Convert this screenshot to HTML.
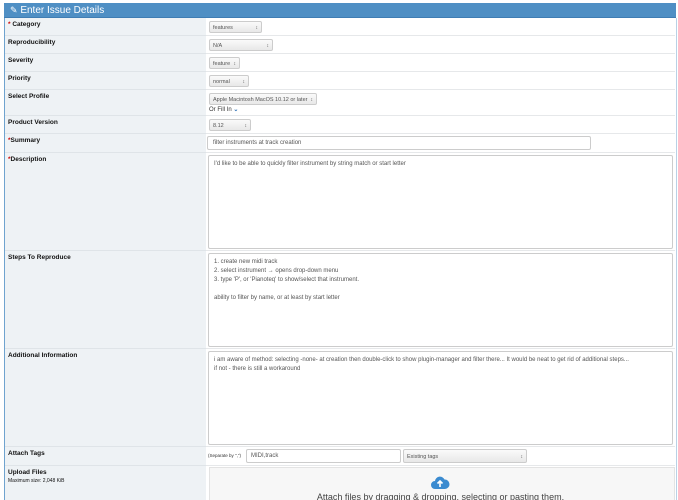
<!DOCTYPE html>
<html><head><meta charset="utf-8"><style>
body{margin:0;width:678px;height:500px;overflow:hidden;background:#fff;font-family:"Liberation Sans",sans-serif;position:relative}
.a{position:absolute}
.hdr{left:4px;top:3px;width:672px;height:14px;background:#4f8fc4;border-bottom:1px solid #3f7db3;color:#fff;font-size:10px;line-height:14px}
.frame{left:4px;top:18px;width:671px;height:482px;border-left:1px solid #6fa3cf;border-right:1px solid #b9d1e6}
.lab{left:5px;width:201px;background:#eef2f5;font-size:6.5px;font-weight:bold;color:#111;padding:3px 0 0 3px;box-sizing:border-box;border-bottom:1px solid #dfe4e8}
.val{left:206px;width:469px;background:#fff;border-bottom:1px solid #e6e8ea;box-sizing:border-box;overflow:hidden}
.sel{position:absolute;height:12px;border:1px solid #ccc;border-radius:2px;background:linear-gradient(#fafafa,#e8e8e8);font-size:5.5px;color:#555;line-height:12px;padding-left:3px;box-sizing:border-box}
.sel:after{content:"\2195";position:absolute;right:3px;top:0;font-size:5px}
.ta{position:absolute;border:1px solid #ccc;background:#fff;font-size:6px;color:#555;padding:4px 5px;box-sizing:border-box;line-height:9px;border-radius:2px}
.r{color:#c00}
</style></head><body>
<div class="a hdr"><span style="margin-left:6px;font-size:9px">&#9998;</span> Enter Issue Details</div>
<div class="a frame"></div>

<div class="a lab" style="top:18px;height:18px"><span class="r">*</span> Category</div>
<div class="a val" style="top:18px;height:18px"><div class="sel" style="left:3px;top:3px;width:53px">features</div></div>
<div class="a lab" style="top:36px;height:18px">Reproducibility</div>
<div class="a val" style="top:36px;height:18px"><div class="sel" style="left:3px;top:3px;width:64px">N/A</div></div>
<div class="a lab" style="top:54px;height:18px">Severity</div>
<div class="a val" style="top:54px;height:18px"><div class="sel" style="left:3px;top:3px;width:31px">feature</div></div>
<div class="a lab" style="top:72px;height:18px">Priority</div>
<div class="a val" style="top:72px;height:18px"><div class="sel" style="left:3px;top:3px;width:40px">normal</div></div>
<div class="a lab" style="top:90px;height:26px">Select Profile</div>
<div class="a val" style="top:90px;height:26px"><div class="sel" style="left:3px;top:3px;width:108px">Apple Macintosh MacOS 10.12 or later</div><div class="a" style="left:3px;top:16px;font-size:6px;color:#333">Or Fill In <span style="color:#2a6fb5;font-weight:bold">&#8964;</span></div></div>
<div class="a lab" style="top:116px;height:18px">Product Version</div>
<div class="a val" style="top:116px;height:18px"><div class="sel" style="left:3px;top:3px;width:42px">8.12</div></div>
<div class="a lab" style="top:134px;height:19px"><span class="r">*</span>Summary</div>
<div class="a val" style="top:134px;height:19px"><div class="ta" style="left:1px;top:2px;width:384px;height:14px;padding:2px 5px">filter instruments at track creation</div></div>
<div class="a lab" style="top:153px;height:98px"><span class="r">*</span>Description</div>
<div class="a val" style="top:153px;height:98px"><div class="ta" style="left:2px;top:2px;width:465px;height:94px">I'd like to be able to quickly filter instrument by string match or start letter</div></div>
<div class="a lab" style="top:251px;height:98px">Steps To Reproduce</div>
<div class="a val" style="top:251px;height:98px"><div class="ta" style="left:2px;top:2px;width:465px;height:94px">1. create new midi track<br>2. select instrument &rarr; opens drop-down menu<br>3. type 'P', or 'Pianoteq' to show/select that instrument.<br><br>ability to filter by name, or at least by start letter</div></div>
<div class="a lab" style="top:349px;height:98px">Additional Information</div>
<div class="a val" style="top:349px;height:98px"><div class="ta" style="left:2px;top:2px;width:465px;height:94px">i am aware of method: selecting -none- at creation then double-click to show plugin-manager and filter there... It would be neat to get rid of additional steps...<br>if not - there is still a workaround</div></div>
<div class="a lab" style="top:447px;height:19px">Attach Tags</div>
<div class="a val" style="top:447px;height:19px"><span class="a" style="left:2px;top:6px;font-size:4.5px;color:#333">(Separate by ",")</span><div class="ta" style="left:40px;top:2px;width:155px;height:14px;padding:2px 4px">MIDI,track</div><div class="sel" style="left:197px;top:2px;width:124px;height:14px;line-height:14px">Existing tags</div></div>
<div class="a lab" style="top:466px;height:34px;border:0">Upload Files<div style="font-weight:normal;font-size:5px;margin-top:2px">Maximum size: 2,048 KiB</div></div>
<div class="a val" style="top:466px;height:34px;border:0"><div class="a" style="left:3px;top:1px;width:464px;height:40px;background:#f7f7f7;border:1px solid #e3e3e3"></div>
<svg class="a" style="left:224px;top:10px" width="20" height="14" viewBox="0 0 20 14"><path d="M5 13a4 4 0 0 1 0-8 5 5 0 0 1 9.5-1.5A4.5 4.5 0 0 1 15 13z" fill="#3b8bd0"/><path d="M10 11V5M7.5 7.5 10 5l2.5 2.5" stroke="#fff" stroke-width="1.6" fill="none"/></svg>
<div class="a" style="left:0;width:469px;top:26px;text-align:center;font-size:9px;color:#444">Attach files by dragging &amp; dropping, selecting or pasting them.</div></div>
</body></html>
